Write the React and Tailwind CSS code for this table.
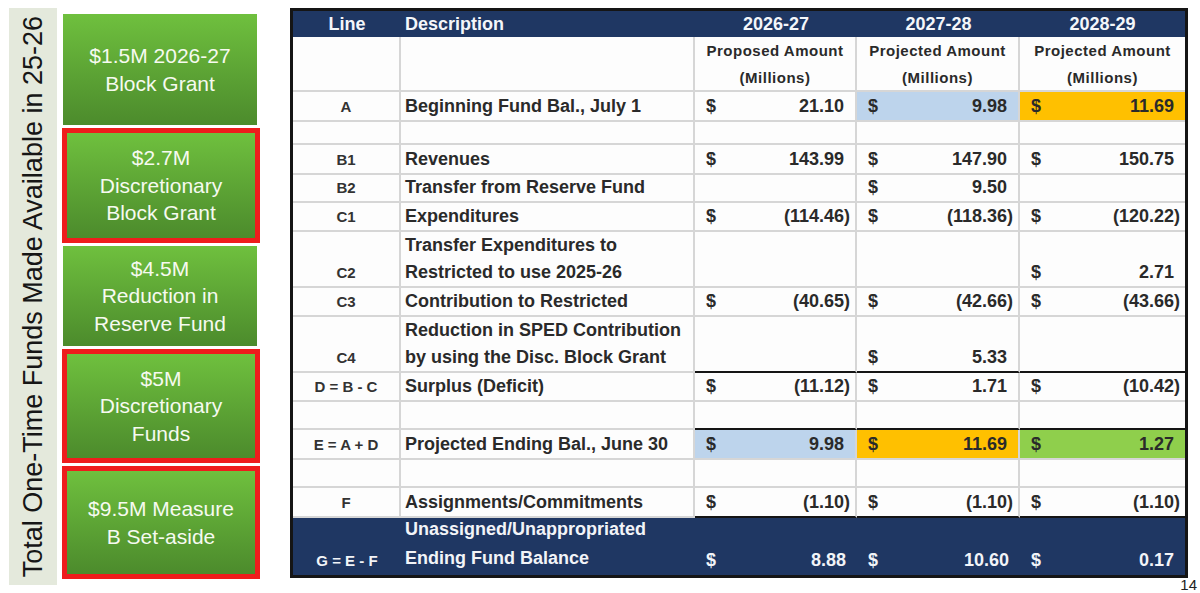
const fundBoxes = [
    { lines: ['$1.5M 2026-27', 'Block Grant'], h: 'h-[111px]', flagged: false },
    { lines: ['$2.7M', 'Discretionary', 'Block Grant'], h: 'h-[115px]', flagged: true },
    { lines: ['$4.5M', 'Reduction in', 'Reserve Fund'], h: 'h-[100px]', flagged: false },
    { lines: ['$5M', 'Discretionary', 'Funds'], h: 'h-[114px]', flagged: true },
    { lines: ['$9.5M Measure', 'B Set-aside'], h: 'h-[113px]', flagged: true },
];

const fills = {
    blue: 'bg-[#bdd4ec]',
    orange: 'bg-[#ffc000]',
    green: 'bg-[#8fcf4c]',
};

const widths = ['w-[108px]', 'w-[294px]', 'w-[162px]', 'w-[163px]', 'w-[165px]'];

// vals: [amount, fill]
const rows = [
    { line: 'A', desc: ['Beginning Fund Bal., July 1'], vals: [['21.10'], ['9.98', 'blue'], ['11.69', 'orange']], h: 'h-[30px]' },
    { blank: true, h: 'h-[23px]' },
    { line: 'B1', desc: ['Revenues'], vals: [['143.99'], ['147.90'], ['150.75']], h: 'h-[30px]' },
    { line: 'B2', desc: ['Transfer from Reserve Fund'], vals: [null, ['9.50'], null], h: 'h-[28px]' },
    { line: 'C1', desc: ['Expenditures'], vals: [['(114.46)'], ['(118.36)'], ['(120.22)']], h: 'h-[29px]' },
    { line: 'C2', desc: ['Transfer Expenditures to', 'Restricted to use 2025-26'], vals: [null, null, ['2.71']], h: 'h-[56px]' },
    { line: 'C3', desc: ['Contribution to Restricted'], vals: [['(40.65)'], ['(42.66)'], ['(43.66)']], h: 'h-[29px]' },
    { line: 'C4', desc: ['Reduction in SPED Contribution', 'by using the Disc. Block Grant'], vals: [null, ['5.33'], null], h: 'h-[56px]' },
    { line: 'D = B - C', desc: ['Surplus (Deficit)'], vals: [['(11.12)'], ['1.71'], ['(10.42)']], h: 'h-[29px]', rule: true },
    { blank: true, h: 'h-[28px]' },
    { line: 'E = A + D', desc: ['Projected Ending Bal., June 30'], vals: [['9.98', 'blue'], ['11.69', 'orange'], ['1.27', 'green']], h: 'h-[30px]', rule: true },
    { blank: true, h: 'h-[28px]' },
    { line: 'F', desc: ['Assignments/Commitments'], vals: [['(1.10)'], ['(1.10)'], ['(1.10)']], h: 'h-[30px]' },
    { line: 'G = E - F', desc: ['Unassigned/Unappropriated', 'Ending Fund Balance'], vals: [['8.88'], ['10.60'], ['0.17']], h: 'h-[57px]', rule: true, total: true },
];

function Amount({ value }) {
    if (!value) {
        return null;
    }
    const [amount, fill] = value;
    const negative = amount.startsWith('(');

    return (
        <div className={`flex h-full w-full items-end justify-between pl-[11px] pr-[5px] ${fill ? fills[fill] : ''}`}>
            <span>$</span>
            <span>
                {amount}
                {!negative && <span className="invisible">)</span>}
            </span>
        </div>
    );
}

function FundBox({ box }) {
    return (
        <div
            className={`${box.h} flex flex-col items-center justify-center bg-gradient-to-b from-[#6fc03e] to-[#4c8b2c] text-center text-[21px] leading-[27.5px] text-[#f6faf0] ${
                box.flagged ? 'w-[198px] border-[5px] border-[#ee1c1c]' : 'ml-[1px] w-[194px]'
            }`}
        >
            {box.lines.map((l) => (
                <span key={l}>{l}</span>
            ))}
        </div>
    );
}

function BudgetRow({ row, ruleBelow }) {
    const gray = 'border-[#d6d6d6]';
    const numBottom = ruleBelow ? 'border-b-[#151515]' : '';

    if (row.blank) {
        return (
            <div className={`flex ${row.h}`}>
                {widths.map((w, i) => (
                    <div
                        key={i}
                        className={`${w} shrink-0 border-b-2 ${gray} ${i < 4 ? 'border-r-2' : ''} ${i > 1 ? numBottom : ''}`}
                    />
                ))}
            </div>
        );
    }

    if (row.total) {
        return (
            <div className={`flex ${row.h} bg-[#1f3763] text-[#f2f4f8]`}>
                <div className={`${widths[0]} shrink-0 flex items-end justify-center pb-[1px] text-[15px] leading-[27px]`}>
                    {row.line}
                </div>
                <div className={`${widths[1]} shrink-0 -mt-[3px] pl-[4px] leading-[28.5px] whitespace-nowrap`}>
                    {row.desc.map((d) => (
                        <div key={d}>{d}</div>
                    ))}
                </div>
                {row.vals.map((v, i) => (
                    <div key={i} className={`${widths[i + 2]} shrink-0 pb-[1px] leading-[27px]`}>
                        <Amount value={v} />
                    </div>
                ))}
            </div>
        );
    }

    return (
        <div className={`flex ${row.h}`}>
            <div
                className={`${widths[0]} shrink-0 flex items-end justify-center border-b-2 border-r-2 ${gray} text-[15px] leading-[27px] text-[#333]`}
            >
                {row.line}
            </div>
            <div
                className={`${widths[1]} shrink-0 flex flex-col justify-end border-b-2 border-r-2 ${gray} pl-[4px] leading-[27px] whitespace-nowrap`}
            >
                {row.desc.map((d) => (
                    <div key={d}>{d}</div>
                ))}
            </div>
            {row.vals.map((v, i) => (
                <div
                    key={i}
                    className={`${widths[i + 2]} shrink-0 border-b-2 ${gray} ${i < 2 ? 'border-r-2' : ''} ${numBottom} leading-[27px]`}
                >
                    <Amount value={v} />
                </div>
            ))}
        </div>
    );
}

export default function App() {
    return (
        <div className="flex h-[593px] w-[1200px] overflow-hidden bg-white font-['Liberation_Sans',Arial,sans-serif]">
            <div className="ml-[9px] mt-[8px] flex h-[577px] w-[48px] shrink-0 items-center justify-center bg-[#e4e9dc]">
                <span className="rotate-180 whitespace-nowrap text-[27px] leading-none text-[#161616] [writing-mode:vertical-rl]">
                    Total One-Time Funds Made Available in 25-26
                </span>
            </div>

            <div className="ml-[5px] mt-[14px] flex w-[198px] shrink-0 flex-col gap-[3px]">
                {fundBoxes.map((box) => (
                    <FundBox key={box.lines[0]} box={box} />
                ))}
            </div>

            <div className="ml-[30px] mt-[8px] flex w-[910px] shrink-0 flex-col">
                <div className="w-[898px] border-[3px] border-[#151515] bg-[#fdfdfd] text-[18px] font-bold text-[#2a2a2a]">
                    <div className="flex h-[26px] bg-[#1f3763] leading-[26px] text-[#f4f6fa]">
                        <div className={`${widths[0]} shrink-0 text-center`}>Line</div>
                        <div className={`${widths[1]} shrink-0 pl-[4px]`}>Description</div>
                        <div className={`${widths[2]} shrink-0 text-center`}>2026-27</div>
                        <div className={`${widths[3]} shrink-0 text-center`}>2027-28</div>
                        <div className={`${widths[4]} shrink-0 text-center`}>2028-29</div>
                    </div>

                    <div className="flex h-[55px]">
                        <div className={`${widths[0]} shrink-0 border-b-2 border-r-2 border-[#d6d6d6]`} />
                        <div className={`${widths[1]} shrink-0 border-b-2 border-r-2 border-[#d6d6d6]`} />
                        {['Proposed Amount', 'Projected Amount', 'Projected Amount'].map((label, i) => (
                            <div
                                key={i}
                                className={`${widths[i + 2]} shrink-0 border-b-2 border-[#d6d6d6] text-center text-[15px] leading-[27px] tracking-[0.5px] ${
                                    i < 2 ? 'border-r-2' : ''
                                }`}
                            >
                                <div>{label}</div>
                                <div>(Millions)</div>
                            </div>
                        ))}
                    </div>

                    {rows.map((row, idx) => (
                        <BudgetRow key={idx} row={row} ruleBelow={rows[idx + 1]?.rule} />
                    ))}
                </div>
                <div className="pr-[3px] text-right text-[15px] leading-[14px] text-[#222]">14</div>
            </div>
        </div>
    );
}
